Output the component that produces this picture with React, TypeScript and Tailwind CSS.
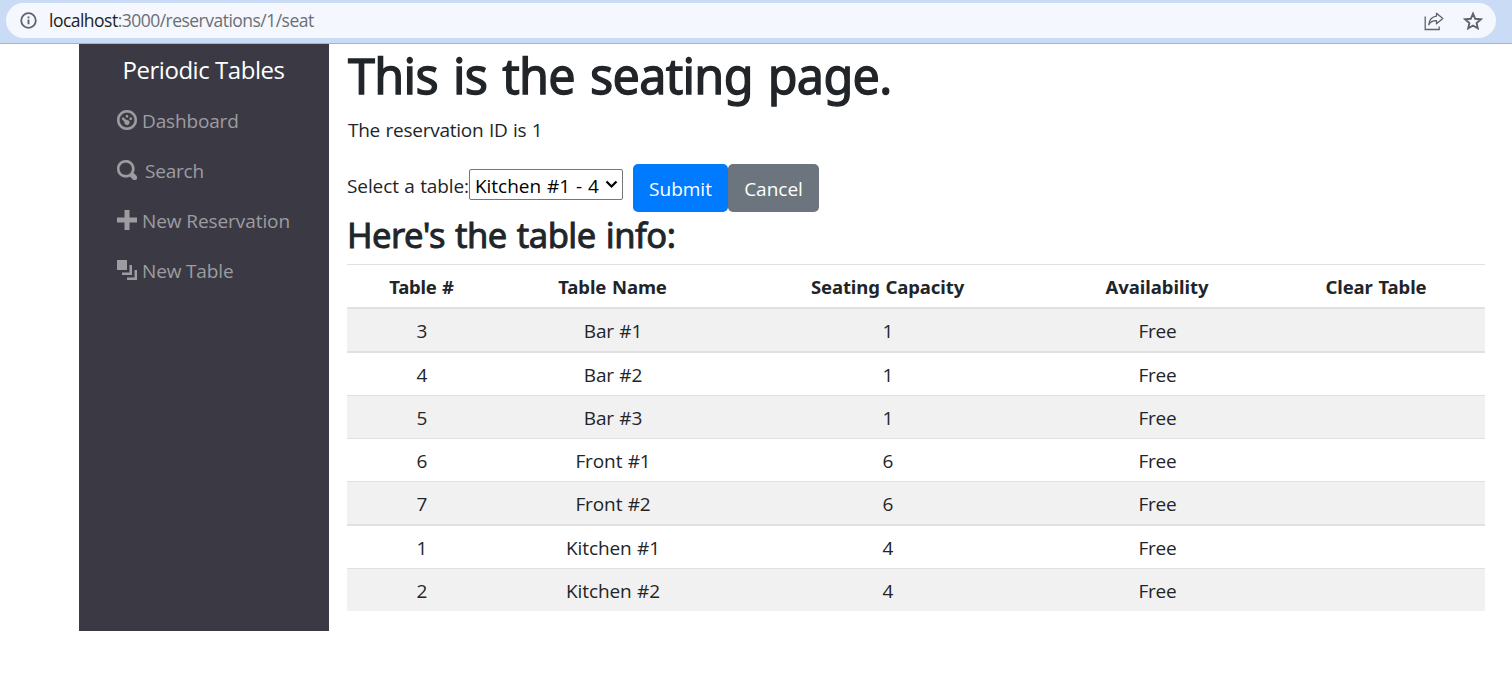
import React from "react";

const dashboardPath =
  "M4 0c-2.2 0-4 1.8-4 4s1.8 4 4 4 4-1.8 4-4-1.8-4-4-4zm0 1c1.66 0 3 1.34 3 3s-1.34 3-3 3-3-1.34-3-3 1.34-3 3-3zm0 1c-.28 0-.5.22-.5.5s.22.5.5.5.5-.22.5-.5-.22-.5-.5-.5zm-1.660 1a.5.5 0 0 0-.19.84l.91.91c-.02.08-.06.16-.06.25 0 .55.45 1 1 1s1-.45 1-1-.45-1-1-1c-.09 0-.17.04-.25.06l-.91-.91a.5.5 0 0 0-.44-.16.5.5 0 0 0-.06 0zm3.160 0c-.28 0-.5.22-.5.5s.22.5.5.5.5-.22.5-.5-.22-.5-.5-.5z";
const searchPath =
  "M3.500 0c-1.930 0-3.500 1.570-3.500 3.500s1.570 3.500 3.500 3.500c.59 0 1.170-.14 1.660-.41a1 1 0 0 0 .13.13l1 1a1.020 1.020 0 1 0 1.440-1.440l-1-1a1 1 0 0 0-.16-.13c.27-.49.44-1.060.44-1.660 0-1.930-1.550-3.500-3.500-3.500zm0 1c1.390 0 2.500 1.110 2.500 2.500 0 .66-.24 1.270-.66 1.720l-.03.03a1 1 0 0 0-.13.13c-.44.4-1.040.63-1.690.63-1.390 0-2.500-1.110-2.500-2.500s1.110-2.500 2.500-2.500z";
const plusPath = "M3 0v3h-3v2h3v3h2v-3h3v-2h-3v-3h-2z";
const layersPath = "M0 0v4h4v-4h-4zm5 2v3h-3v1h4v-4h-1zm2 2v3h-3v1h4v-4h-1z";

const navItems = [
  { label: "Dashboard", path: dashboardPath, weight: 0.1, text: "ml-[5px] tracking-[-0.15px]" },
  { label: "Search", path: searchPath, weight: 0.1, text: "ml-[8px] tracking-[-0.2px]" },
  { label: "New Reservation", path: plusPath, weight: 0, text: "ml-[5px] tracking-[-0.08px]" },
  { label: "New Table", path: layersPath, weight: 0, text: "ml-[5px] tracking-[-0.15px]" },
];

const columns = [
  { label: "Table #", style: "tracking-[-0.25px]" },
  { label: "Table Name", style: "tracking-[-0.1px]" },
  { label: "Seating Capacity", style: "tracking-[-0.1px]" },
  { label: "Availability", style: "tracking-[-0.03px]" },
  { label: "Clear Table", style: "pr-px tracking-[-0.1px]" },
];

const rows = [
  { id: 3, name: "Bar #1", capacity: 1, style: "h-[42px] bg-[#f1f1f1]" },
  { id: 4, name: "Bar #2", capacity: 1, style: "h-11 border-t-2" },
  { id: 5, name: "Bar #3", capacity: 1, style: "h-[43px] border-t bg-[#f1f1f1]" },
  { id: 6, name: "Front #1", capacity: 6, style: "h-[43px] border-t" },
  { id: 7, name: "Front #2", capacity: 6, style: "h-[43px] border-t bg-[#f1f1f1]" },
  { id: 1, name: "Kitchen #1", capacity: 4, style: "h-11 border-t-2" },
  { id: 2, name: "Kitchen #2", capacity: 4, style: "h-[43px] border-t bg-[#f1f1f1]" },
];

function AddressBar() {
  return (
    <header className="h-11 border-b border-[#a4b5cd] bg-[#cadbf6] pt-[3px] pr-4 pl-1.5">
      <div className="flex h-[35px] items-center rounded-full bg-[#f4f7fd] pr-[12px] pl-[13px]">
        <svg className="h-[19px] w-[19px]" viewBox="0 0 18 18" fill="none" stroke="#5f6368">
          <circle cx="9" cy="9" r="6.900" strokeWidth="1.700" />
          <path d="M9 8v4.500M9 5.200v1.700" strokeWidth="1.800" />
        </svg>
        <span className="ml-[11px] text-[17.5px] tracking-[-0.52px] text-[#6b6f75]">
          <span className="text-[#202124]">localhost</span>:3000/reservations/1/seat
        </span>
        <svg className="ml-auto h-5 w-5" viewBox="0 0 20 20" fill="none" stroke="#5f6368" strokeWidth="1.300">
          <path d="M1.200 5.500v13h14V15.500" />
          <path d="M12.500 2.200l6.300 5.300-6.300 5.300v-3.100c-3.500-.1-6 1-7.700 4 .5-5 3.200-8 7.700-8.600z" strokeLinejoin="round" />
        </svg>
        <svg className="mr-px ml-[19px] h-5 w-5" viewBox="0 0 20 20" fill="none" stroke="#5f6368" strokeWidth="1.900">
          <path d="M10 2.700l2.200 5.100 5.600.5-4.200 3.700 1.200 5.400-4.800-2.900-4.800 2.900 1.200-5.400-4.200-3.700 5.600-.5z" />
        </svg>
      </div>
    </header>
  );
}

function Sidebar() {
  return (
    <aside className="h-[587px] w-[250px] shrink-0 bg-[#3b3a44]">
      <div className="flex h-[52px] items-center justify-center pr-px text-[24px] tracking-[-0.45px] text-white">
        Periodic Tables
      </div>
      <nav className="text-[19px] text-[#9d9ca1]">
        {navItems.map((item) => (
          <a key={item.label} className="flex h-[50px] items-center pl-[38px]">
            <svg className="-mt-[2px] h-5 w-5" viewBox="0 0 8 8" fill="currentColor" stroke="currentColor" strokeWidth={item.weight}>
              <path d={item.path} />
            </svg>
            <span className={item.text}>{item.label}</span>
          </a>
        ))}
      </nav>
    </aside>
  );
}

function SeatForm() {
  return (
    <form className="flex h-12 items-start">
      <label className="mt-2 w-[122px] leading-[28px] tracking-[-0.1px] whitespace-nowrap [word-spacing:0.6px]">
        Select a table:
      </label>
      <div className="relative mt-[5px] w-[154px]">
        <select className="block h-[31px] w-full appearance-none rounded-[2px] border border-[#767676] bg-white pt-[3px] pl-[5px] leading-[26px] tracking-[-0.03px] text-black [word-spacing:1px]">
          <option>Kitchen #1 - 4</option>
        </select>
        <svg className="pointer-events-none absolute top-[11px] right-[5px] h-[9px] w-[13px]" viewBox="0 0 13 9" fill="none" stroke="#000" strokeWidth="2.200">
          <path d="M1.500 1.500l5 5 5-5" />
        </svg>
      </div>
      <button type="button" className="ml-[10px] h-12 w-[95px] rounded-[5px] bg-[#007bff] pt-[2px] text-white">
        Submit
      </button>
      <button type="button" className="h-12 w-[91px] rounded-[5px] bg-[#6c757d] pt-[2px] text-white">
        Cancel
      </button>
    </form>
  );
}

function TablesList() {
  return (
    <table className="block w-[1138px] text-center leading-[28px]">
      <thead className="block font-['Noto_Sans','Open_Sans',sans-serif] text-[18.5px]">
        <tr className="grid h-[45px] grid-cols-[149px_233px_317px_222px_217px] items-center border-t border-b-2 border-[#dee2e6]">
          {columns.map((c) => (
            <th key={c.label} className={`pt-px font-bold [word-spacing:1px] ${c.style}`}>
              {c.label}
            </th>
          ))}
        </tr>
      </thead>
      <tbody className="block">
        {rows.map((r) => (
          <tr
            key={r.id}
            className={`grid grid-cols-[149px_233px_317px_222px_217px] items-center border-[#dee2e6] *:pt-[2px] *:pl-px ${r.style}`}
          >
            <td>{r.id}</td>
            <td className="tracking-[-0.1px] [word-spacing:0.5px]">{r.name}</td>
            <td>{r.capacity}</td>
            <td className="tracking-[-0.2px]">Free</td>
            <td />
          </tr>
        ))}
      </tbody>
    </table>
  );
}

export default function App() {
  return (
    <div className="h-[683px] overflow-hidden bg-white font-['Open_Sans','Noto_Sans',sans-serif] text-[#212529]">
      <AddressBar />
      <div className="flex pl-[79px]">
        <Sidebar />
        <main className="pl-[18px] text-[19px]">
          <h1 className="h-[71px] pt-px pl-px font-['Noto_Sans','Open_Sans',sans-serif] text-[48.5px] leading-[60px] font-normal tracking-[-0.68px] [-webkit-text-stroke:1.3px] [word-spacing:3px]">
            This is the seating page.
          </h1>
          <p className="h-[49px] pl-px leading-[30px] tracking-[-0.25px] [word-spacing:0.8px]">The reservation ID is 1</p>
          <SeatForm />
          <h2 className="h-[52px] font-['Noto_Sans','Open_Sans',sans-serif] text-[34.5px] leading-[45px] font-normal tracking-[-0.5px] [-webkit-text-stroke:0.9px] [word-spacing:1.6px]">
            Here's the table info:
          </h2>
          <TablesList />
        </main>
      </div>
    </div>
  );
}
